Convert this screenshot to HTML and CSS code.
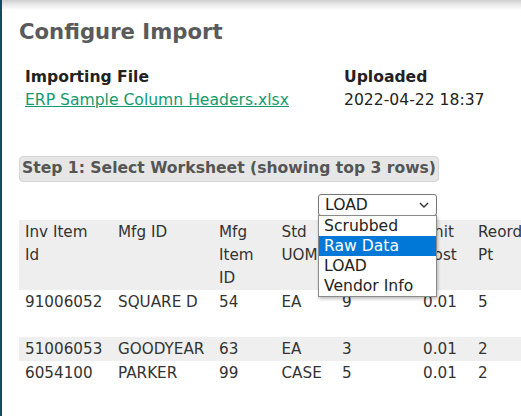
FILE: index.html
```html
<!DOCTYPE html>
<html>
<head>
<meta charset="utf-8">
<link rel="stylesheet" href="styles.css">
</head>
<body>
<div class="frame">
  <h1 class="title">Configure Import</h1>
  <div class="fileinfo">
    <div class="label">Importing File</div>
    <div class="label">Uploaded</div>
    <div><a class="file-link" href="#">ERP Sample Column Headers.xlsx</a></div>
    <div>2022-04-22 18:37</div>
  </div>
  <div class="step"><span class="step-label">Step 1: Select Worksheet (showing top 3 rows)</span></div>
  <div class="select-row">
    <div class="select-wrap">
      <div class="select">
        <span>LOAD</span>
        <svg class="chev" width="10" height="6" viewBox="0 0 10 6"><path d="M1 1 L5 5 L9 1" fill="none" stroke="#333" stroke-width="1.4"/></svg>
      </div>
      <ul class="options">
        <li>Scrubbed</li>
        <li class="active">Raw Data</li>
        <li>LOAD</li>
        <li>Vendor Info</li>
      </ul>
    </div>
  </div>
  <table class="grid">
    <colgroup>
      <col class="c1"><col class="c2"><col class="c3"><col class="c4"><col class="c5"><col class="c6"><col class="c7">
    </colgroup>
    <thead>
      <tr>
        <td>Inv Item Id</td>
        <td>Mfg ID</td>
        <td>Mfg Item ID</td>
        <td>Std UOM</td>
        <td></td>
        <td>Unit Cost</td>
        <td>Reorder Pt</td>
      </tr>
    </thead>
    <tbody>
      <tr class="tall">
        <td>91006052</td><td>SQUARE D</td><td>54</td><td>EA</td><td>9</td><td>0.01</td><td>5</td>
      </tr>
      <tr class="alt">
        <td>51006053</td><td>GOODYEAR</td><td>63</td><td>EA</td><td>3</td><td>0.01</td><td>2</td>
      </tr>
      <tr>
        <td>6054100</td><td>PARKER</td><td>99</td><td>CASE</td><td>5</td><td>0.01</td><td>2</td>
      </tr>
    </tbody>
  </table>
</div>
</body>
</html>
```

FILE: styles.css
```css
html, body {
  margin: 0;
  padding: 0;
  overflow: hidden;
  background: #fff;
}
body {
  font-family: "DejaVu Sans", Verdana, sans-serif;
  font-size: 15.6px;
  line-height: 23.5px;
  color: #333;
}
.frame {
  border-left: 2px solid #0d4e5c;
  min-height: 416px;
  padding: 0 0 0 17px;
  background: linear-gradient(#cfcfcf 0px, #e6e6e6 4px, #ffffff 10px);
  box-sizing: border-box;
}
.title {
  margin: 0;
  padding-top: 20px;
  font-size: 21.2px;
  line-height: 23.5px;
  font-weight: bold;
  color: #5a5a5a;
}
.fileinfo {
  display: grid;
  grid-template-columns: 319px auto;
  margin-top: 22px;
  padding-left: 6px;
  color: #222;
}
.label {
  font-weight: bold;
}
.file-link {
  color: #139a6c;
  text-decoration: underline;
}
.step {
  display: flex;
  margin-top: 43.5px;
}
.step-label {
  display: inline-block;
  background: #e6e6e6;
  border: 1px solid #d6d6d6;
  border-radius: 4px;
  padding: 0 2px 0 2px;
  font-weight: bold;
  color: #555;
}
.select-row {
  margin-top: 12px;
  padding-left: 299px;
  display: flex;
}
.select-wrap {
  position: relative;
}
.select {
  width: 119px;
  height: 22px;
  box-sizing: border-box;
  border: 1px solid #767676;
  border-radius: 3px;
  display: flex;
  align-items: center;
  justify-content: space-between;
  padding: 0 7px 0 6px;
  line-height: 20px;
  color: #222;
  background: #fff;
}
.chev {
  display: block;
}
.options {
  position: absolute;
  top: 21px;
  left: 0;
  width: 119px;
  box-sizing: border-box;
  margin: 0;
  padding: 0;
  list-style: none;
  background: #fff;
  border: 1px solid #8a8a8a;
  box-shadow: 1px 2px 3px rgba(0, 0, 0, 0.25);
  z-index: 5;
}
.options li {
  height: 20px;
  line-height: 20px;
  padding-left: 5px;
  color: #222;
}
.options li.active {
  background: #0078d7;
  color: #fff;
}
.grid {
  margin-top: 4px;
  border-collapse: collapse;
  table-layout: fixed;
  width: 543px;
  font-size: 15.2px;
  line-height: 23.2px;
}
.c1 { width: 93px; }
.c2 { width: 101px; }
.c3 { width: 62.5px; }
.c4 { width: 60.5px; }
.c5 { width: 81px; }
.c6 { width: 55px; }
.c7 { width: 90px; }
.grid td {
  padding: 1px 12px 0 6px;
  vertical-align: top;
  white-space: normal;
  overflow: visible;
}
.grid thead tr {
  background: #eeeeee;
}
.grid tr.tall td {
  height: 45.5px;
}
.grid tr.alt {
  background: #efefef;
}
```
